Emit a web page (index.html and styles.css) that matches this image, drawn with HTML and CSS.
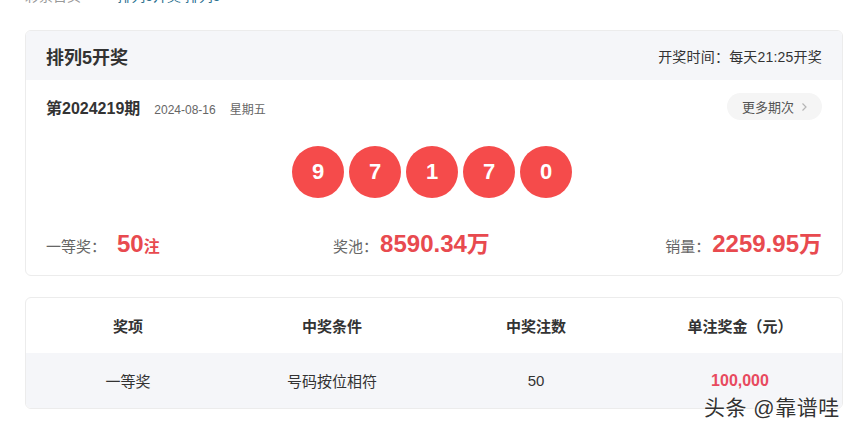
FILE: index.html
```html
<!DOCTYPE html>
<html lang="zh">
<head>
<meta charset="utf-8">
<title>排列5开奖</title>
<link rel="stylesheet" href="styles.css">
</head>
<body>
<div class="page">
  <div class="crumbs"><span class="crumb-home">彩票首页</span><span class="crumb-sep">&gt;</span><span class="crumb-cur">排列5开奖 排列5</span></div>

  <section class="card draw">
    <header class="draw-head">
      <h1 class="draw-title">排列5开奖</h1>
      <div class="draw-time">开奖时间：每天21:25开奖</div>
    </header>
    <div class="draw-body">
      <div class="issue-row">
        <div class="issue-info">
          <span class="issue-no">第2024219期</span>
          <span class="issue-date">2024-08-16</span>
          <span class="issue-week">星期五</span>
        </div>
        <a class="more-btn">更多期次<svg class="chev" width="7" height="10" viewBox="0 0 7 10"><path d="M1.5 1.5 L5 5 L1.5 8.5" fill="none" stroke="#b5b5b5" stroke-width="1.2"/></svg></a>
      </div>
      <div class="balls">
        <span class="ball">9</span>
        <span class="ball">7</span>
        <span class="ball">1</span>
        <span class="ball">7</span>
        <span class="ball">0</span>
      </div>
      <div class="stats">
        <div class="stat stat-first"><span class="stat-label">一等奖：</span><span class="stat-val">50</span><span class="stat-unit">注</span></div>
        <div class="stat stat-mid"><span class="stat-label">奖池：</span><span class="stat-val">8590.34</span><span class="stat-wan">万</span></div>
        <div class="stat"><span class="stat-label">销量：</span><span class="stat-val">2259.95</span><span class="stat-wan">万</span></div>
      </div>
    </div>
  </section>

  <section class="card prize">
    <div class="prize-row prize-headrow">
      <div class="cell">奖项</div>
      <div class="cell">中奖条件</div>
      <div class="cell">中奖注数</div>
      <div class="cell">单注奖金（元）</div>
    </div>
    <div class="prize-row prize-bodyrow">
      <div class="cell">一等奖</div>
      <div class="cell">号码按位相符</div>
      <div class="cell">50</div>
      <div class="cell money">100,000</div>
    </div>
  </section>
</div>
<div class="watermark">头条 @靠谱哇</div>
</body>
</html>
```
FILE: styles.css
```css
* { box-sizing: border-box; }
html, body {
  margin: 0;
  padding: 0;
  background: #ffffff;
}
body {
  font-family: "Liberation Sans", "Noto Sans CJK SC", sans-serif;
  color: #333;
  width: 852px;
  height: 430px;
  overflow: hidden;
  position: relative;
}
.page {
  padding: 0 9px 0 25px;
}
.crumbs {
  height: 14px;
  margin-top: -11px;
  margin-bottom: 27px;
  font-size: 14px;
  line-height: 14px;
  color: #999;
  display: flex;
  gap: 14px;
}
.crumb-cur { color: #2a6f8f; }

.card {
  border: 1px solid #ececec;
  border-radius: 6px;
  overflow: hidden;
  background: #fff;
}
.draw-head {
  height: 49px;
  background: #f5f6f9;
  display: flex;
  align-items: center;
  justify-content: space-between;
  padding: 0 20px 0 20px;
}
.draw-title {
  margin: 0;
  font-size: 18px;
  font-weight: bold;
  color: #333;
}
.draw-time {
  font-size: 14px;
  color: #333;
  letter-spacing: 0.2px;
}
.draw-body {
  padding: 13px 20px 20px 20px;
}
.issue-row {
  display: flex;
  align-items: center;
  justify-content: space-between;
  height: 27px;
}
.issue-info {
  display: flex;
  align-items: baseline;
}
.issue-no {
  font-size: 16px;
  font-weight: bold;
  color: #333;
  margin-right: 14px;
}
.issue-date {
  font-size: 12px;
  color: #666;
  margin-right: 14px;
}
.issue-week {
  font-size: 12px;
  color: #666;
}
.more-btn {
  display: flex;
  align-items: center;
  gap: 7px;
  height: 27px;
  padding: 0 14px 0 15px;
  border-radius: 14px;
  background: #f5f5f5;
  font-size: 13px;
  color: #555;
}
.balls {
  display: flex;
  justify-content: center;
  gap: 5px;
  margin-top: 26px;
  padding-right: 4px;
}
.ball {
  width: 52px;
  height: 52px;
  border-radius: 50%;
  background: #f54b4b;
  color: #fff;
  font-size: 22px;
  font-weight: bold;
  display: flex;
  align-items: center;
  justify-content: center;
}
.stats {
  display: flex;
  justify-content: space-between;
  align-items: baseline;
  margin-top: 27px;
  height: 30px;
}
.stat {
  display: flex;
  align-items: baseline;
}
.stat-label {
  font-size: 15px;
  color: #666;
  margin-right: 2px;
}
.stat-first .stat-label { margin-right: 11px; }
.stat-mid { margin-left: -2px; }
.stat-val {
  font-size: 24px;
  font-weight: bold;
  color: #e84a4f;
}
.stat-unit {
  font-size: 16px;
  font-weight: bold;
  color: #e84a4f;
}
.stat-wan {
  font-size: 23px;
  font-weight: bold;
  color: #e84a4f;
}

.prize {
  margin-top: 21px;
}
.prize-row {
  display: grid;
  grid-template-columns: repeat(4, 1fr);
  align-items: center;
  text-align: center;
}
.prize-headrow {
  height: 55px;
  font-size: 15px;
  font-weight: bold;
  color: #333;
}
.prize-bodyrow {
  height: 55px;
  background: #f5f6f9;
  font-size: 15px;
  color: #333;
}
.money {
  color: #e84a5f;
  font-weight: bold;
  font-size: 16px;
}
.watermark {
  position: absolute;
  left: 704px;
  top: 391px;
  font-size: 21px;
  color: #333;
  letter-spacing: 0.5px;
  text-shadow: 0 0 2px #fff, 0 0 2px #fff, 0 0 3px #fff;
}
```
